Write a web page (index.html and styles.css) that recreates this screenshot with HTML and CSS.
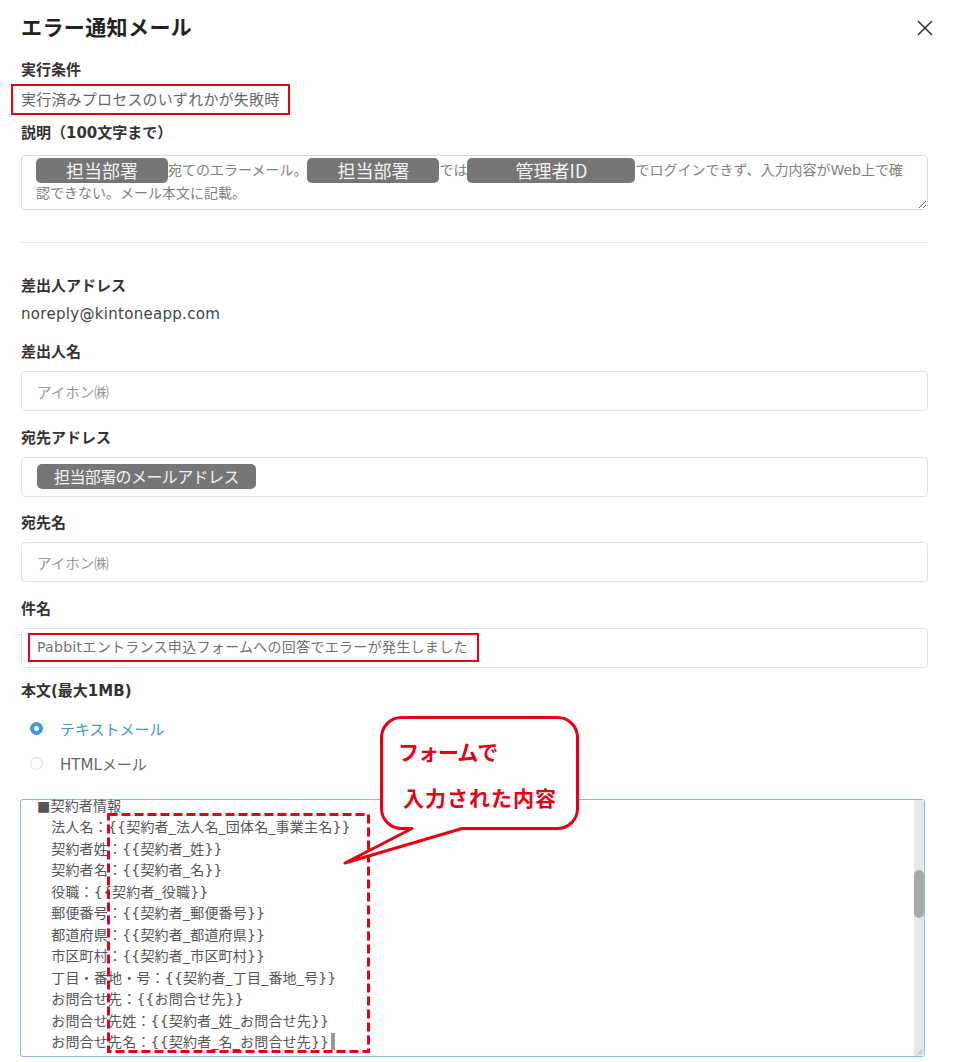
FILE: index.html
```html
<!DOCTYPE html>
<html lang="ja">
<head>
  <meta charset="UTF-8">
  <meta name="viewport" content="width=device-width, initial-scale=1.0">
  <title>エラー通知メール</title>
  <link rel="stylesheet" href="styles.css">
</head>

<body>
  <div class="dialog">
    <!-- Header -->
    <div class="dialog-header">
      <h1 class="dialog-title">エラー通知メール</h1>
      <span class="close-btn">
        <svg width="16" height="16" viewBox="0 0 16 16"><path d="M1 1 L15 15 M15 1 L1 15" stroke="#333" stroke-width="1.5" fill="none"/></svg>
      </span>
    </div>

    <!-- Condition -->
    <div class="field-label label-first">実行条件</div>
    <div class="condition"><span class="mark-box">実行済みプロセスのいずれかが失敗時</span></div>

    <!-- Memo -->
    <div class="field-label label-memo">説明（100文字まで）</div>
    <div class="memo"><span class="chip chip-dept">担当部署</span>宛てのエラーメール。<span class="chip chip-dept">担当部署</span>では<span class="chip chip-admin">管理者ID</span>でログインできず、入力内容がWeb上で確<br>認できない。メール本文に記載。</div>

    <hr class="divider">

    <!-- Sender -->
    <div class="field-label label-sender">差出人アドレス</div>
    <div class="sender-address">noreply@kintoneapp.com</div>

    <div class="field-label label-after-text">差出人名</div>
    <div class="text-input"><span class="placeholder">アイホン㈱</span></div>

    <div class="field-label label-after-input">宛先アドレス</div>
    <div class="text-input"><span class="chip chip-mail">担当部署のメールアドレス</span></div>

    <div class="field-label label-after-input">宛先名</div>
    <div class="text-input"><span class="placeholder">アイホン㈱</span></div>

    <div class="field-label label-after-input">件名</div>
    <div class="text-input subject-input"><span class="mark-box subject-box">Pabbitエントランス申込フォームへの回答でエラーが発生しました</span></div>

    <!-- Body -->
    <div class="field-label label-body">本文(最大1MB)</div>
    <div class="radio-group">
      <div class="radio-row checked"><span class="radio"></span>テキストメール</div>
      <div class="radio-row"><span class="radio"></span>HTMLメール</div>
    </div>

    <div class="mail-body">
      <div class="mail-text">■契約者情報
　法人名：{{契約者_法人名_団体名_事業主名}}
　契約者姓：{{契約者_姓}}
　契約者名：{{契約者_名}}
　役職：{{契約者_役職}}
　郵便番号：{{契約者_郵便番号}}
　都道府県：{{契約者_都道府県}}
　市区町村：{{契約者_市区町村}}
　丁目・番地・号：{{契約者_丁目_番地_号}}
　お問合せ先：{{お問合せ先}}
　お問合せ先姓：{{契約者_姓_お問合せ先}}
　お問合せ先名：{{契約者_名_お問合せ先}}<span class="caret"></span></div>
      <div class="scrollbar">
        <div class="scroll-thumb"></div>
        <svg class="grip" width="6" height="6" viewBox="0 0 6 6"><path d="M5.5 0.5 L0.5 5.5 M5.5 3 L3 5.5" stroke="#999" stroke-width="0.8"/></svg>
      </div>

      <!-- annotations -->
      <svg class="dashed-mark" width="264" height="241" viewBox="0 0 264 241">
        <rect x="1.5" y="1.5" width="260" height="237" fill="none" stroke="#e60012" stroke-width="3" stroke-dasharray="9 4"/>
      </svg>
      <div class="callout">
        <svg class="callout-shape" width="250" height="160" viewBox="0 0 250 160">
          <path d="M61.5 5.5 H217.5 A20 20 0 0 1 237.5 25.5 V96.5 A20 20 0 0 1 217.5 116.5 H122 L5 151 L72 116.5 H61.5 A20 20 0 0 1 41.5 96.5 V25.5 A20 20 0 0 1 61.5 5.5 Z" fill="#fff" stroke="#e60012" stroke-width="3" stroke-linejoin="round"/>
        </svg>
        <div class="callout-text">
          <div class="callout-line1">フォームで</div>
          <div class="callout-line2">入力された内容</div>
        </div>
      </div>
    </div>
  </div>
</body>
</html>
```

FILE: styles.css
```css
/* Base */
body
{
  margin: 0;
  background: #fff;
  color: #333;
  font-family: "DejaVu Sans", "Noto Sans CJK JP", sans-serif;
}

.dialog
{
  padding: 14px 34px 0 21px;
}

/* Header */
.dialog-header
{
  display: flex;
  justify-content: space-between;
  align-items: center;
  height: 28px;
}

.dialog-title
{
  margin: 0;
  font-size: 21px;
  font-weight: bold;
  line-height: 28px;
  letter-spacing: 0.4px;
  color: #222;
}

.close-btn
{
  display: flex;
  margin-right: -5px;
}

/* Labels */
.field-label
{
  font-size: 15px;
  font-weight: bold;
  line-height: 20px;
  color: #333;
}

.label-first { margin-top: 18px; }
.label-memo { margin-top: 8px; }
.label-sender { margin-top: 33px; }
.label-after-text { margin-top: 18px; }
.label-after-input { margin-top: 16.5px; }
.label-body { margin-top: 13.5px; }

/* Red marker boxes */
.mark-box
{
  display: inline-block;
  border: 2px solid #e60012;
}

.condition
{
  margin-top: 4px;
}

.condition .mark-box
{
  margin-left: -10px;
  padding: 3.5px 9px 3.5px 8px;
  font-size: 15px;
  line-height: 20px;
  letter-spacing: 0.2px;
  color: #666;
}

/* Memo textarea */
.memo
{
  box-sizing: border-box;
  margin-top: 12px;
  height: 55px;
  padding: 3px 14px 0 14px;
  border: 1px solid #ddd;
  border-radius: 4px;
  font-size: 14px;
  line-height: 23px;
  color: #808080;
  overflow: hidden;
  resize: vertical;
}

.chip
{
  display: inline-block;
  box-sizing: border-box;
  height: 25px;
  line-height: 25px;
  background: #767676;
  color: #f2f2f2;
  border-radius: 5px;
  font-family: "Noto Sans CJK JP", sans-serif;
}

.memo .chip
{
  vertical-align: top;
  margin: -1px 0;
  text-align: center;
  font-size: 18px;
}

.chip-dept { width: 132px; }
.chip-admin { width: 168px; }

.chip-mail
{
  padding: 0 17px;
  font-size: 16px;
  letter-spacing: -0.6px;
}

.divider
{
  margin: 32px 0 0;
  border: 0;
  border-top: 1px solid #e6e6e6;
}

.sender-address
{
  margin-top: 8px;
  font-size: 15px;
  line-height: 20px;
  letter-spacing: 0.3px;
  color: #444;
}

/* Text inputs */
.text-input
{
  box-sizing: border-box;
  display: flex;
  align-items: center;
  margin-top: 9px;
  height: 40px;
  padding: 0 15px;
  border: 1px solid #e3e3e3;
  border-radius: 4px;
  font-size: 14px;
}

.text-input .placeholder
{
  font-size: 14.5px;
  color: #999;
}

.subject-input
{
  padding: 0 6px;
}

.subject-box
{
  padding: 0 9px 0 7px;
  line-height: 25px;
  letter-spacing: 0.3px;
  color: #707070;
}

/* Radios */
.radio-group
{
  margin-top: 9.5px;
}

.radio-row
{
  display: flex;
  align-items: center;
  height: 35px;
  padding-left: 9px;
  font-size: 15px;
  color: #666;
}

.radio
{
  box-sizing: border-box;
  width: 13px;
  height: 13px;
  margin-right: 17px;
  border: 1px solid #dcdcdc;
  border-radius: 50%;
  background: #fff;
}

.radio-row.checked
{
  color: #3d96e0;
}

.radio-row.checked .radio
{
  border: 4px solid #3d96e0;
}

/* Mail body textarea */
.mail-body
{
  position: relative;
  display: flex;
  box-sizing: border-box;
  margin: 18.5px 0 0 -1px;
  width: 905px;
  height: 258px;
  border: 1px solid #86b8e8;
  border-radius: 3px;
}

.mail-text
{
  flex: 1;
  overflow: hidden;
  margin-top: -4px;
  padding-left: 16px;
  font-size: 14px;
  line-height: 21.45px;
  letter-spacing: 0.2px;
  color: #555;
  white-space: pre;
}

.caret
{
  display: inline-block;
  width: 4px;
  height: 17px;
  margin-left: 2px;
  vertical-align: -3px;
  background: #999;
}

.scrollbar
{
  display: flex;
  flex-direction: column;
  width: 10px;
  background: #e7e7e7;
}

.scroll-thumb
{
  margin-top: 70px;
  height: 48px;
  border-radius: 5px;
  background: #a9a9a9;
}

.grip
{
  margin: auto 0 1px 3px;
}

/* Annotations */
.dashed-mark
{
  position: absolute;
  left: 86px;
  top: 13px;
}

.callout
{
  position: absolute;
  left: 319px;
  top: -88px;
  width: 250px;
  height: 160px;
}

.callout-shape
{
  position: absolute;
  left: 0;
  top: 0;
}

.callout-text
{
  position: absolute;
  left: 58px;
  top: 16px;
  font-family: "Noto Sans CJK JP", sans-serif;
  font-size: 21px;
  font-weight: bold;
  line-height: 46px;
  color: #e60012;
  white-space: nowrap;
}

.callout-line1
{
  letter-spacing: -1px;
}

.callout-line2
{
  padding-left: 5px;
  letter-spacing: 1px;
}
```
